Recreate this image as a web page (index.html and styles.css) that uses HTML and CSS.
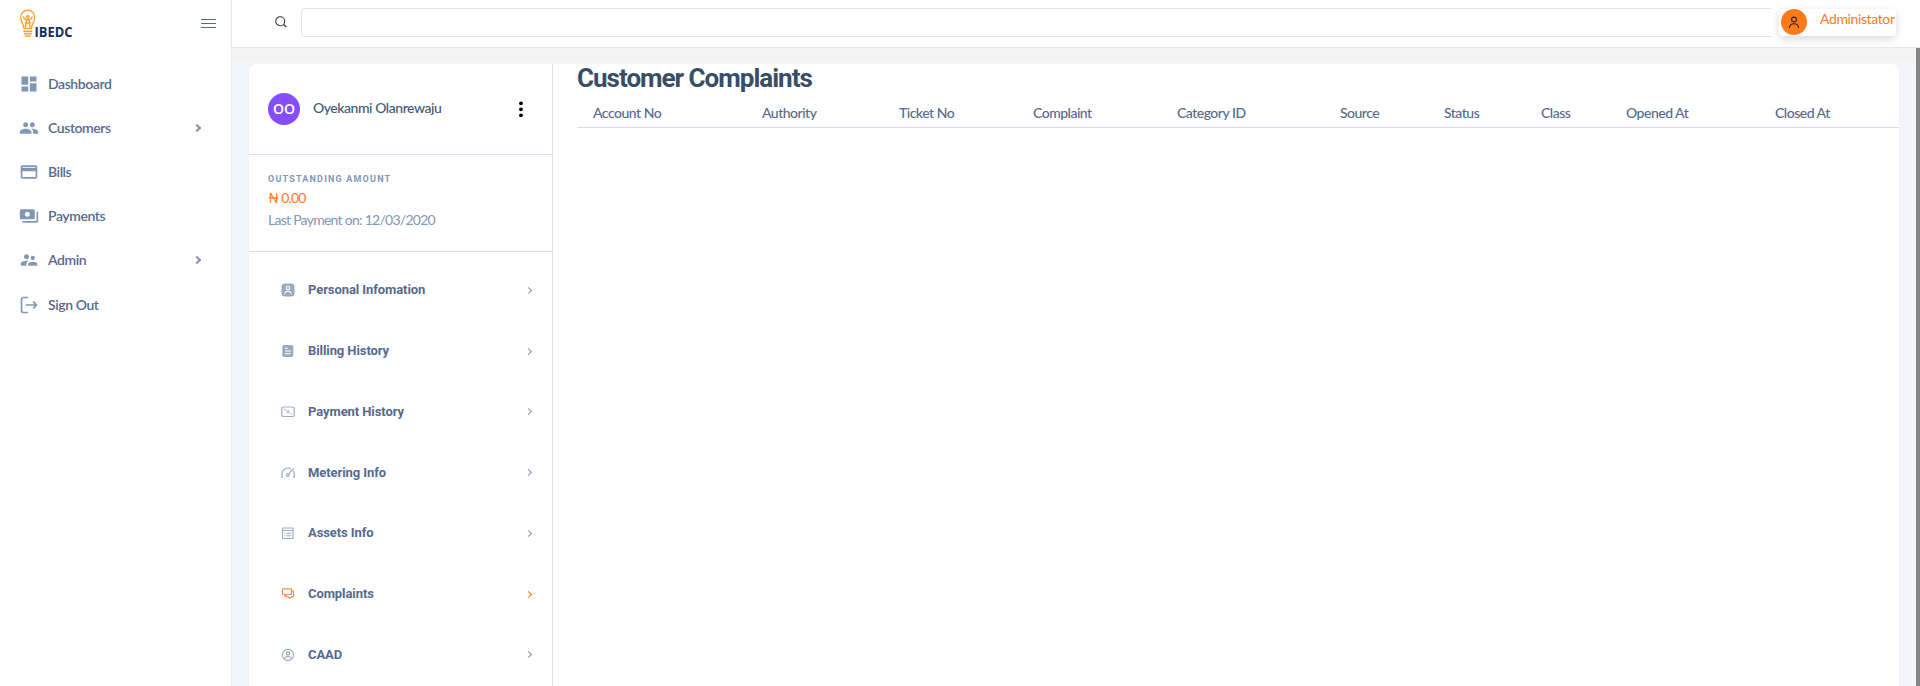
FILE: index.html
```html
<!DOCTYPE html>
<html lang="en">
<head>
<meta charset="utf-8">
<title>Customer Complaints</title>
<link rel="stylesheet" href="styles.css">
</head>
<body>
<div class="app">
  <aside class="sidebar">
    <div class="brand">
      <svg class="logo" width="60" height="36" viewBox="0 0 60 36">
        <g fill="none" stroke="#f5a33c" stroke-width="1.4">
          <path d="M5 19.500C5 15.500 1.700 13 1.700 8.500A7 7.300 0 0 1 15.700 8.500C15.700 13 12.500 15.500 12.500 19.500Z"/>
          <circle cx="8.800" cy="8" r="1.300"/>
          <path d="M4.200 7.500C5.200 10.500 6.800 11 8.800 11S12.300 10.500 13.300 7.500M7.300 11.500V14L6.300 18.500M10.300 11.500V14L11.300 18.500M5.800 14H11.800"/>
          <path d="M4.300 22.300H13.300M4.800 24.600H12.800M5.800 27H11.800" stroke-width="1.600"/>
        </g>
        <text class="logo-text" x="15.500" y="28" textLength="38" lengthAdjust="spacingAndGlyphs">IBEDC</text>
      </svg>
      <svg class="burger" width="15" height="11" viewBox="0 0 15 11"><path d="M0 1.500H15M0 5.500H15M0 9.500H15" stroke="#566a8d" stroke-width="1"/></svg>
    </div>
    <nav class="nav">
      <a class="nav-item"><svg viewBox="0 0 24 24"><path d="M3 13h8V3H3v10zm0 8h8v-6H3v6zm10 0h8V11h-8v10zm0-18v6h8V3h-8z"/></svg><span>Dashboard</span></a>
      <a class="nav-item"><svg viewBox="0 0 24 24"><path d="M16 11c1.660 0 2.990-1.340 2.990-3S17.660 5 16 5c-1.660 0-3 1.340-3 3s1.340 3 3 3zm-8 0c1.660 0 2.990-1.340 2.990-3S9.660 5 8 5C6.340 5 5 6.340 5 8s1.340 3 3 3zm0 2c-2.330 0-7 1.170-7 3.500V19h14v-2.500c0-2.330-4.670-3.500-7-3.500zm8 0c-.29 0-.62.02-.97.05 1.160.84 1.970 1.970 1.970 3.450V19h6v-2.500c0-2.330-4.670-3.500-7-3.500z"/></svg><span>Customers</span><i class="chev"></i></a>
      <a class="nav-item"><svg viewBox="0 0 24 24"><path d="M20 4H4c-1.110 0-2 .89-2 2v12c0 1.110.89 2 2 2h16c1.110 0 2-.89 2-2V6c0-1.110-.89-2-2-2zm0 14H4v-7h16v7zm0-11H4V6h16v1z"/></svg><span>Bills</span></a>
      <a class="nav-item"><svg viewBox="0 0 24 24"><path d="M19 14V6c0-1.100-.9-2-2-2H3c-1.100 0-2 .9-2 2v8c0 1.100.9 2 2 2h14c1.100 0 2-.9 2-2zm-9-1c-1.660 0-3-1.340-3-3s1.340-3 3-3 3 1.340 3 3-1.340 3-3 3zm13-6v11c0 1.100-.9 2-2 2H4v-2h17V7h2z"/></svg><span>Payments</span></a>
      <a class="nav-item"><svg viewBox="0 0 24 24"><path d="M16.500 12c1.380 0 2.490-1.120 2.490-2.500S17.880 7 16.500 7 14 8.120 14 9.500s1.120 2.500 2.500 2.500zM9 11c1.660 0 2.990-1.340 2.990-3S10.660 5 9 5 6 6.340 6 8s1.340 3 3 3zm7.500 3c-1.830 0-5.500.92-5.500 2.750V19h11v-2.250c0-1.830-3.670-2.750-5.500-2.750zM9 13c-2.330 0-7 1.170-7 3.500V19h7v-2.250c0-.85.33-2.340 2.370-3.470C10.500 13.100 9.660 13 9 13z"/></svg><span>Admin</span><i class="chev"></i></a>
      <a class="nav-item"><svg viewBox="0 0 24 24"><path d="M11 3H5a2 2 0 0 0-2 2v14a2 2 0 0 0 2 2h6M8 12h13M17 8l4 4-4 4" fill="none" stroke="#8197b3" stroke-width="2"/></svg><span>Sign Out</span></a>
    </nav>
  </aside>
  <div class="page">
    <header class="topbar">
      <svg class="search-icon" width="12" height="12" viewBox="0 0 12 12"><circle cx="5.200" cy="5.200" r="4.500" fill="none" stroke="#333" stroke-width="1.100"/><path d="M8.500 8.500L11.200 11" stroke="#333" stroke-width="1.200"/></svg>
      <div class="search"></div>
      <div class="user">
        <span class="user-badge"><svg width="12" height="13" viewBox="0 0 12 13" fill="none" stroke="#33251c" stroke-width="1.100"><circle cx="6" cy="3.500" r="2.400"/><path d="M1.300 12C1.500 9.300 3.300 7.700 6 7.700S10.500 9.300 10.700 12"/></svg></span>
        <span class="user-name">Administator</span>
      </div>
    </header>
    <div class="scroll">
      <main class="card">
        <section class="profile">
          <div class="person">
            <span class="avatar">OO</span><span class="name">Oyekanmi Olanrewaju</span>
            <svg class="dots" width="4" height="17" viewBox="0 0 4 17"><circle cx="2" cy="2.300" r="1.900"/><circle cx="2" cy="8.300" r="1.900"/><circle cx="2" cy="14.300" r="1.900"/></svg>
          </div>
          <div class="balance">
            <div class="label">OUTSTANDING AMOUNT</div>
            <div class="amount">₦ 0.00</div>
            <div class="last">Last Payment on: 12/03/2020</div>
          </div>
          <div class="menu">
            <a class="menu-item"><svg viewBox="0 0 14 14"><rect x=".5" y=".5" width="13" height="13" rx="3.500" fill="#9aabc1"/><g fill="none" stroke="#fff" stroke-width="1.100"><circle cx="7" cy="5" r="1.700"/><path d="M3.800 10.700C4.200 8.800 5.200 8.300 7 8.300S9.800 8.800 10.200 10.700"/></g></svg><span>Personal Infomation</span><i class="chev"></i></a>
            <a class="menu-item"><svg viewBox="0 0 14 14"><rect x="1.300" y="1" width="11" height="12" rx="1.800" fill="#9aabc1"/><path d="M4 4.200H6.500M4 7H9.700M4 9.800H9.700" stroke="#fff" stroke-width="1.100"/></svg><span>Billing History</span><i class="chev"></i></a>
            <a class="menu-item"><svg viewBox="0 0 14 14"><g fill="none" stroke="#9aabc1"><rect x=".8" y="2" width="12.400" height="9.500" rx="1.500" stroke-width="1.200"/><circle cx="7" cy="6.700" r="1.200"/><path d="M3 4.700H5M9.500 8.900H11.200"/></g></svg><span>Payment History</span><i class="chev"></i></a>
            <a class="menu-item"><svg viewBox="0 0 14 14"><g fill="none" stroke="#9aabc1" stroke-width="1.200"><path d="M1.500 11.500C-.5 6 3 2 7 2C8.300 2 9.300 2.300 10.200 2.800M12.300 5C13.500 7 13.400 9.500 12.500 11.500M0 11H1.700M12.300 11H14"/><circle cx="6.800" cy="9" r="1.400"/><path d="M7.800 7.900L12.700 2.500"/></g></svg><span>Metering Info</span><i class="chev"></i></a>
            <a class="menu-item"><svg viewBox="0 0 14 14"><g fill="none" stroke="#9aabc1" stroke-width="1.100"><rect x="1.500" y="2" width="10.500" height="10.500" rx=".5"/><path d="M1.500 4.500H12M3.300 7.300H4.300M5.500 7.300H10.300M3.300 9.700H4.300M5.500 9.700H10.300"/></g></svg><span>Assets Info</span><i class="chev"></i></a>
            <a class="menu-item active"><svg viewBox="0 0 14 14"><g fill="none" stroke="#ff8b43" stroke-width="1.200" stroke-linejoin="round"><path d="M2.200 1.800H9.800Q10.500 1.800 10.500 2.500V6.800Q10.500 7.500 9.800 7.500H6L4 9.300V7.500H2.200Q1.500 7.500 1.500 6.800V2.500Q1.500 1.800 2.200 1.800Z"/><path d="M10.500 4H12.500V9.700H10.700L9 11.200L7 9.700H5.300"/></g></svg><span>Complaints</span><i class="chev"></i></a>
            <a class="menu-item"><svg viewBox="0 0 14 14"><g fill="none" stroke="#9aabc1" stroke-width="1.100"><circle cx="7" cy="7" r="5.600"/><circle cx="7" cy="5.600" r="1.700"/><path d="M3.600 10.900C4 9 5.200 8.500 7 8.500S10 9 10.400 10.900"/></g></svg><span>CAAD</span><i class="chev"></i></a>
          </div>
        </section>
        <section class="content">
          <h1>Customer Complaints</h1>
          <div class="thead">
            <span>Account No</span><span>Authority</span><span>Ticket No</span><span>Complaint</span><span>Category ID</span><span>Source</span><span>Status</span><span>Class</span><span>Opened At</span><span>Closed At</span>
          </div>
        </section>
      </main>
      <div class="track"></div>
    </div>
  </div>
</div>
</body>
</html>
```
FILE: styles.css
```css
* { box-sizing: border-box; }
body { margin: 0; background: #f4f5fa; color: #566a8d; font: 500 14px/20px Lato, "Liberation Sans", sans-serif; }
.app { display: flex; height: 686px; overflow: hidden; }
.sidebar { width: 232px; flex: none; background: #fff; border-right: 1px solid #e9ebf1; }
.brand { display: flex; justify-content: space-between; align-items: flex-start; height: 62px; padding: 9px 15px 0 19px; }
.logo { display: block; }
.logo-text { font: 700 15px "Open Sans", sans-serif; fill: #14305c; }
.burger { margin-top: 9px; }
.nav-item { display: flex; align-items: center; height: 44.1px; padding: 0 28px 0 19px; font-weight: 600; letter-spacing: -.42px; }
.nav-item svg { width: 20px; height: 20px; margin-right: 9px; fill: #8197b3; }
.chev { width: 5px; height: 5px; margin: 0 3px 0 auto; border: solid #8197b3; border-width: 1.5px 1.5px 0 0; transform: rotate(45deg); }
.nav-item .chev { width: 6px; height: 6px; border-width: 2px 2px 0 0; }
.page { flex: 1; min-width: 0; display: flex; flex-direction: column; }
.topbar { height: 48px; flex: none; display: flex; align-items: flex-start; background: #fff; border-bottom: 1px solid #e5e6ee; box-shadow: 0 1px 3px #0000000c; padding: 8px 0 0 43px; }
.search-icon { margin-top: 8px; }
.search { width: 1470px; height: 29px; margin-left: 14px; border: 1px solid #e1e6ea; border-right: 0; border-radius: 4px 0 0 4px; }
.user { display: flex; width: 117px; height: 27px; margin: 1px 0 0 8px; padding-left: 2px; background: #fff; border-radius: 4px; box-shadow: 0 3px 8px #00000026; }
.user-badge { flex: none; width: 26px; height: 26px; display: flex; align-items: center; justify-content: center; background: #ff7a1a; border-radius: 50%; }
.user-name { margin-left: 13px; line-height: 20px; color: #ff7a1a; font-weight: 400; letter-spacing: -.38px; }
.scroll { flex: 1; display: flex; justify-content: space-between; min-height: 0; background: linear-gradient(#f3f3f4 0 12px, #f4f5fa 16px); }
.track { width: 4px; background: #858786; }
.card { width: 1650px; margin: 16px 0 0 17px; display: flex; background: #fff; border-radius: 8px 8px 0 0; }
.profile { width: 304px; flex: none; border-right: 1px solid #e0e1ec; }
.person { height: 91px; display: flex; align-items: center; padding: 0 29px 0 19px; border-bottom: 1px solid #d9dbe8; }
.avatar { width: 32px; height: 32px; border-radius: 50%; background: #864dff; color: #fff; text-align: center; font: 600 14px/31px "Open Sans", sans-serif; }
.name { margin: -2px 0 0 13px; color: #435971; letter-spacing: -.45px; }
.dots { margin-left: auto; fill: #000; }
.balance { height: 97px; padding: 17px 19px 0; border-bottom: 1px solid #d9dbe8; font-weight: 400; }
.label { font: 700 9px/14px Roboto, sans-serif; letter-spacing: 1.2px; color: #8197b3; }
.amount { margin-top: 2px; color: #ff7a1a; letter-spacing: -.8px; }
.last { margin-top: 2px; color: #8197b3; letter-spacing: -.45px; }
.last { letter-spacing: -.73px; }
.menu { padding-top: 8px; }
.menu-item { display: flex; align-items: center; height: 60.75px; padding: 0 18px 0 32px; font: 700 13px/20px Roboto, sans-serif; letter-spacing: -.08px; }
.menu-item svg { width: 14px; height: 14px; margin-right: 13px; }
.active .chev { border-color: #ff7a1a; }
.content { width: 1346px; padding-left: 24px; }
h1 { margin: 0; font: 700 26px/29px Roboto, sans-serif; letter-spacing: -1px; color: #384e65; }
.thead { display: grid; grid-template-columns: 169px 137px 134px 144px 163px 104px 97px 85px 149px 140px; height: 35px; align-items: center; border-bottom: 1px solid #d9dbe8; letter-spacing: -.5px; }
.thead span { padding: 5px 0 0 16px; }
```
